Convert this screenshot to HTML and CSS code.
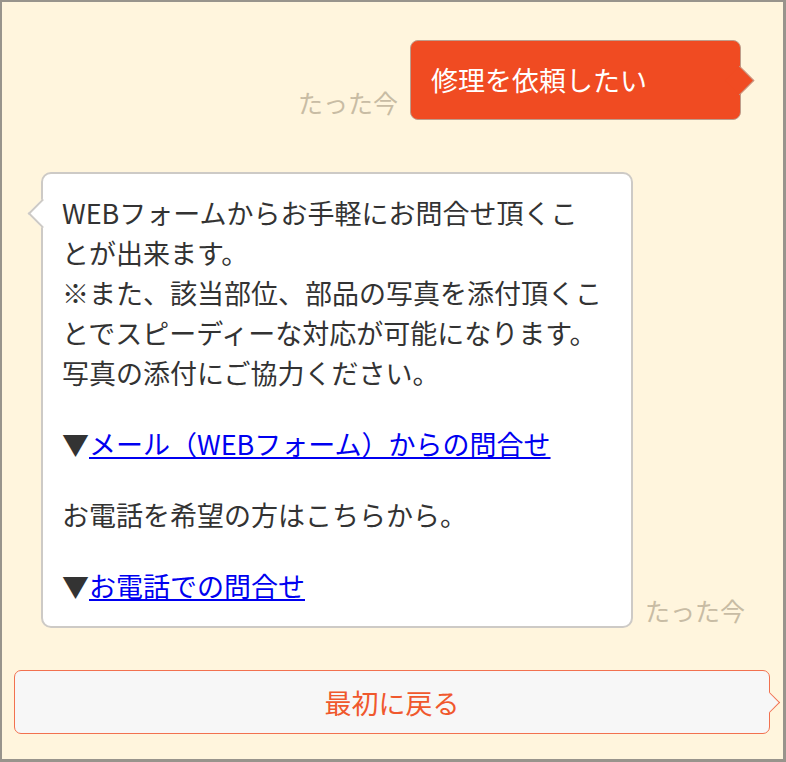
FILE: index.html
```html
<!DOCTYPE html>
<html lang="ja">
<head>
    <meta charset="UTF-8">
    <meta name="viewport" content="width=device-width, initial-scale=1.0">
    <title>チャット</title>
    <link rel="stylesheet" href="styles.css">
</head>
<body>
    <div class="chat">
        <div class="row row-user">
            <span class="time">たった今</span>
            <div class="bubble bubble-user">修理を依頼したい</div>
        </div>

        <div class="row row-bot">
            <div class="bubble bubble-bot">
                <p>WEBフォームからお手軽にお問合せ頂くこ<br>とが出来ます。<br>※また、該当部位、部品の写真を添付頂くこ<br>とでスピーディーな対応が可能になります。<br>写真の添付にご協力ください。</p>
                <p>▼<a href="#">メール（WEBフォーム）からの問合せ</a></p>
                <p>お電話を希望の方はこちらから。</p>
                <p>▼<a href="#">お電話での問合せ</a></p>
            </div>
            <span class="time">たった今</span>
        </div>

        <button class="restart" type="button">最初に戻る</button>
    </div>
</body>
</html>
```

FILE: styles.css
```css
html, body {
    margin: 0;
    padding: 0;
}

body {
    font-family: "Noto Sans CJK JP", "Noto Sans", sans-serif;
    color: #333;
}

.chat {
    box-sizing: border-box;
    width: 786px;
    height: 762px;
    background-color: #fff5dd;
    border-style: solid;
    border-color: #98948c;
    border-width: 2px 3px 3px 2px;
    display: flex;
    flex-direction: column;
}

.row {
    display: flex;
    align-items: flex-end;
    gap: 12px;
}

.row-user {
    justify-content: flex-end;
    margin-top: 38px;
    padding-right: 42px;
}

.row-bot {
    margin-top: 52px;
    padding-left: 39px;
}

.time {
    font-size: 25px;
    line-height: 36px;
    color: #c8bca4;
    white-space: nowrap;
}

.bubble {
    position: relative;
    box-sizing: border-box;
}

.bubble-user {
    background-color: #f04b22;
    color: #fff;
    font-size: 27px;
    line-height: 40px;
    padding: 19px 93px 19px 20px;
    border: 1px solid #bf9c8a;
    border-radius: 8px;
}

.bubble-user::after {
    content: "";
    position: absolute;
    right: -10px;
    top: 50%;
    width: 20px;
    height: 20px;
    margin-top: -10px;
    background-color: #f04b22;
    border-top: 1px solid #bf9c8a;
    border-right: 1px solid #bf9c8a;
    transform: rotate(45deg);
}

.bubble-bot {
    width: 592px;
    background-color: #fff;
    border: 2px solid #cdcac6;
    border-radius: 10px;
    padding: 19px 19px 20px 19px;
    font-size: 27px;
    line-height: 40px;
}

.bubble-bot::before {
    content: "";
    position: absolute;
    left: -11px;
    top: 29px;
    width: 19px;
    height: 19px;
    background-color: #fff;
    border-left: 2px solid #cdcac6;
    border-bottom: 2px solid #cdcac6;
    transform: rotate(45deg);
}

.bubble-bot p {
    margin: 0 0 31px;
}

.bubble-bot p:last-child {
    margin-bottom: 0;
}

.bubble-bot a {
    color: #0000f0;
    text-decoration: underline;
}

.restart {
    position: relative;
    box-sizing: border-box;
    align-self: flex-start;
    margin: 42px 0 0 12px;
    width: 756px;
    height: 64px;
    background-color: #f7f7f7;
    border: 1.5px solid #f2714f;
    border-radius: 7px;
    font-family: inherit;
    font-size: 27px;
    color: #f0582d;
    cursor: pointer;
}

.restart::after {
    content: "";
    position: absolute;
    right: -8px;
    top: 50%;
    width: 14px;
    height: 14px;
    margin-top: -7px;
    background-color: #f7f7f7;
    border-top: 1.5px solid #f2714f;
    border-right: 1.5px solid #f2714f;
    transform: rotate(45deg);
}
```
